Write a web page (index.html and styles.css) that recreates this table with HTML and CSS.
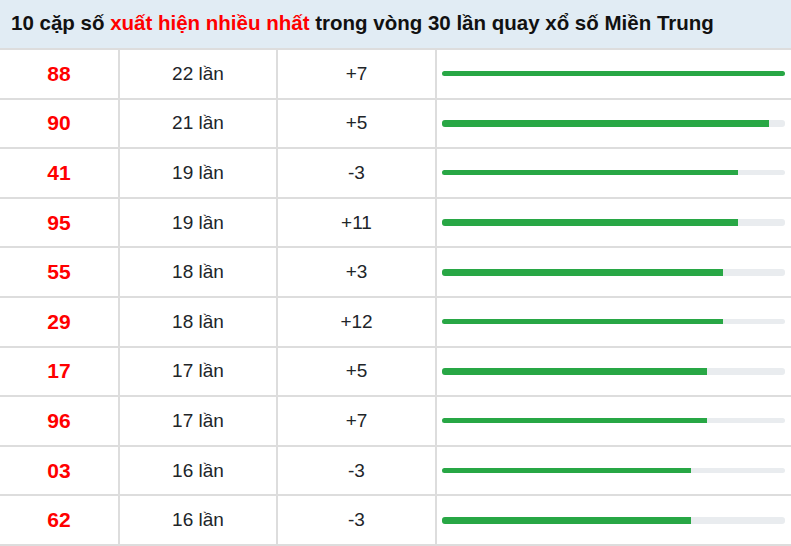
FILE: index.html
```html
<!DOCTYPE html>
<html lang="vi">
<head>
<meta charset="utf-8">
<title>10 cặp số xuất hiện nhiều nhất</title>
<link rel="stylesheet" href="styles.css">
</head>
<body>
<div class="table">
  <div class="head">10 cặp số <span class="hl">xuất hiện nhiều nhất</span> trong vòng 30 lần quay xổ số Miền Trung</div>

  <div class="cell num">88</div><div class="cell">22 lần</div><div class="cell">+7</div>
  <div class="cell barcell"><div class="track"><div class="fill" style="width:100%"></div></div></div>

  <div class="cell num">90</div><div class="cell">21 lần</div><div class="cell">+5</div>
  <div class="cell barcell"><div class="track wide"><div class="fill" style="width:95.45%"></div></div></div>

  <div class="cell num">41</div><div class="cell">19 lần</div><div class="cell">-3</div>
  <div class="cell barcell"><div class="track"><div class="fill" style="width:86.36%"></div></div></div>

  <div class="cell num">95</div><div class="cell">19 lần</div><div class="cell">+11</div>
  <div class="cell barcell"><div class="track wide"><div class="fill" style="width:86.36%"></div></div></div>

  <div class="cell num">55</div><div class="cell">18 lần</div><div class="cell">+3</div>
  <div class="cell barcell"><div class="track wide"><div class="fill" style="width:81.82%"></div></div></div>

  <div class="cell num">29</div><div class="cell">18 lần</div><div class="cell">+12</div>
  <div class="cell barcell"><div class="track"><div class="fill" style="width:81.82%"></div></div></div>

  <div class="cell num">17</div><div class="cell">17 lần</div><div class="cell">+5</div>
  <div class="cell barcell"><div class="track wide"><div class="fill" style="width:77.27%"></div></div></div>

  <div class="cell num">96</div><div class="cell">17 lần</div><div class="cell">+7</div>
  <div class="cell barcell"><div class="track"><div class="fill" style="width:77.27%"></div></div></div>

  <div class="cell num">03</div><div class="cell">16 lần</div><div class="cell">-3</div>
  <div class="cell barcell"><div class="track"><div class="fill" style="width:72.73%"></div></div></div>

  <div class="cell num">62</div><div class="cell">16 lần</div><div class="cell">-3</div>
  <div class="cell barcell"><div class="track wide"><div class="fill" style="width:72.73%"></div></div></div>
</div>
</body>
</html>
```

FILE: styles.css
```css
html, body {
  margin: 0;
  padding: 0;
  background: #fff;
}
body {
  font-family: "Liberation Sans", Arial, sans-serif;
  color: #212529;
  overflow: hidden;
}
.table {
  width: 791px;
  display: grid;
  grid-template-columns: 118px 156px 157px 1fr;
  grid-template-rows: 48px;
  grid-auto-rows: 47.6px;
  gap: 2px;
  background: #dddddd;
  padding-bottom: 2px;
}
.head {
  grid-column: 1 / -1;
  background: #e1ecf4;
  padding: 0 0 0 11px;
  line-height: 46px;
  font-size: 20.5px;
  font-weight: bold;
  color: #111;
  white-space: nowrap;
}
.hl {
  color: #f00;
}
.cell {
  background: #fff;
  display: flex;
  align-items: center;
  justify-content: center;
  font-size: 19px;
  color: #212529;
}
.num {
  color: #f00;
  font-weight: bold;
  font-size: 21px;
}
.barcell {
  justify-content: stretch;
  padding: 0 6px 0 5px;
}
.track {
  flex: 1;
  height: 5px;
  background: #e9ecef;
  border-radius: 3px;
  overflow: hidden;
}
.track.wide {
  height: 7px;
}
.fill {
  height: 100%;
  background: #28a745;
}
```
